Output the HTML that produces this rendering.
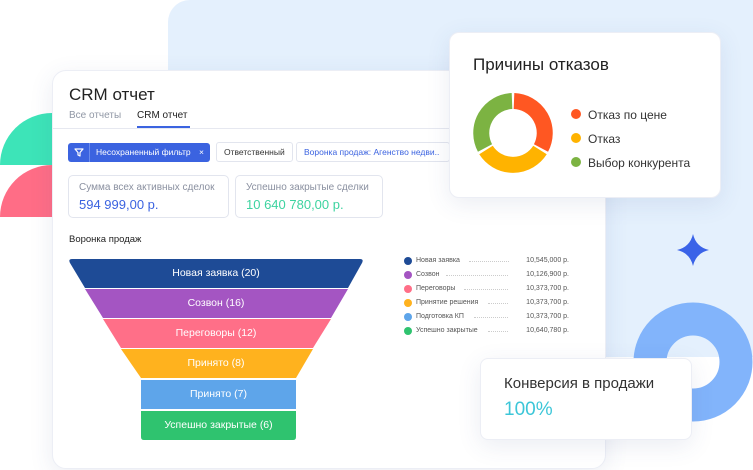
<!DOCTYPE html>
<html><head><meta charset="utf-8"><style>
*{margin:0;padding:0;box-sizing:border-box}
body{width:753px;height:470px;background:#fff;position:relative;overflow:hidden;font-family:"Liberation Sans","Noto Sans CJK SC",sans-serif}
.abs{position:absolute}
.panel{left:168px;top:0;width:600px;height:357px;background:#e4f0fd;border-radius:22px 0 0 0}
.card{background:#fff;border-radius:14px;box-shadow:0 6px 24px rgba(60,80,140,.10);border:1px solid #eceef5}
.tag{position:absolute;top:142px;height:20px;border:1px solid #e2e5ee;border-radius:3px;font-size:8.5px;line-height:18px;padding:0 7px;color:#333}
.box{position:absolute;top:175px;height:43px;border:1px solid #e2e5ee;border-radius:5px;padding:6px 10px}
.box .l{font-size:10px;color:#8a90a0}
.box .v{font-size:13px;margin-top:4px}
.row{position:absolute;left:0;font-size:7px;color:#555;width:165px;height:10px;line-height:10px}
.row i{position:absolute;left:0;top:1px;width:8px;height:8px;border-radius:50%}
.row span.n{position:absolute;left:12px}
.row span.d{position:absolute;border-top:1px dotted #ccc;top:5px}
.row span.p{position:absolute;right:0}
.fl{position:absolute;color:#fff;font-size:10.5px;text-align:center;line-height:29px}
</style></head><body>
<div class="abs panel"></div>
<svg class="abs" style="left:0;top:0" width="753" height="470">
<circle cx="693" cy="362" r="43" fill="none" stroke="#82b4fb" stroke-width="33"/>
<path d="M52 113 A52 52 0 0 0 0 165 L52 165Z" fill="#3de4b8"/>
<path d="M52 165 A52 52 0 0 0 0 217 L52 217Z" fill="#ff6d86"/>
<path d="M693 234 Q696 247 709 250 Q696 253 693 266 Q690 253 677 250 Q690 247 693 234Z" fill="#3a63e8"/>
<path d="M407 385 Q409 396 420 398 Q409 400 407 411 Q405 400 394 398 Q405 396 407 385Z" fill="#dbe7fb"/>
</svg>
<div class="abs card" style="left:52px;top:70px;width:554px;height:399px"></div>
<div class="abs" style="left:69px;top:85px;font-size:17px;color:#222">CRM отчет</div>
<div class="abs" style="left:69px;top:110px;font-size:10px;color:#9097a5">Все отчеты</div>
<div class="abs" style="left:137px;top:110px;font-size:10px;color:#222">CRM отчет</div>
<div class="abs" style="left:137px;top:126px;width:53px;height:2px;background:#3b63e0"></div>
<div class="abs" style="left:53px;top:128px;width:552px;height:1px;background:#e6e8f0"></div>
<div class="abs" style="left:68px;top:143px;width:142px;height:19px;background:#3b63e0;border-radius:3px;color:#fff;font-size:8.5px;line-height:19px">
<span style="position:absolute;left:0;top:0;width:22px;height:19px;border-right:1px solid #6b8cee;text-align:center">
<svg width="10" height="9" viewBox="0 0 10 9" style="margin-top:5px"><path d="M1 1h8L6 4.5V8L4 7V4.5Z" fill="none" stroke="#fff" stroke-width="1.2" stroke-linejoin="round"/></svg></span>
<span style="position:absolute;left:28px">Несохраненный фильтр</span><span style="position:absolute;left:131px">×</span></div>
<div class="tag" style="left:216px">Ответственный</div>
<div class="tag" style="left:296px;width:154px;color:#3b63e0;overflow:hidden;white-space:nowrap">Воронка продаж: Агенство недви..</div>
<div class="box" style="left:68px;width:161px"><div class="l">Сумма всех активных сделок</div><div class="v" style="color:#3b63e0">594 999,00 р.</div></div>
<div class="box" style="left:235px;width:148px"><div class="l">Успешно закрытые сделки</div><div class="v" style="color:#3dd3a0">10 640 780,00 р.</div></div>
<div class="abs" style="left:69px;top:234px;font-size:9.5px;color:#222">Воронка продаж</div>
<svg class="abs" style="left:0;top:0" width="600" height="470">
<path d="M72 259H360Q364 259 362 263L348 288H85L70 263Q68 259 72 259Z" fill="#1e4b96"/>
<path d="M85 289H348L331 318H103Z" fill="#a455c2"/>
<path d="M103 319H331L313 348H121Z" fill="#ff6f88"/>
<path d="M121 349H313L296 378H141Z" fill="#ffb21e"/>
<rect x="141" y="380" width="155" height="29" fill="#5ea5ea"/>
<path d="M141 411H296V437Q296 440 293 440H144Q141 440 141 437Z" fill="#2fc36f"/>
</svg>
<div class="fl" style="left:69px;top:259px;width:294px">Новая заявка (20)</div>
<div class="fl" style="left:69px;top:289px;width:294px">Созвон (16)</div>
<div class="fl" style="left:69px;top:319px;width:294px">Переговоры (12)</div>
<div class="fl" style="left:69px;top:349px;width:294px">Принято (8)</div>
<div class="fl" style="left:141px;top:380px;width:155px">Принято (7)</div>
<div class="fl" style="left:141px;top:411px;width:155px">Успешно закрытые (6)</div>
<div class="abs" style="left:404px;top:256px;width:151px;height:84px">
<div class="row" style="top:0"><i style="background:#1e4b96"></i><span class="n">Новая заявка</span><span class="d" style="left:65px;width:40px"></span><span class="p">10,545,000 р.</span></div>
<div class="row" style="top:14px"><i style="background:#a455c2"></i><span class="n">Созвон</span><span class="d" style="left:42px;width:62px"></span><span class="p">10,126,900 р.</span></div>
<div class="row" style="top:28px"><i style="background:#ff6f88"></i><span class="n">Переговоры</span><span class="d" style="left:60px;width:44px"></span><span class="p">10,373,700 р.</span></div>
<div class="row" style="top:42px"><i style="background:#ffb21e"></i><span class="n">Принятие решения</span><span class="d" style="left:84px;width:20px"></span><span class="p">10,373,700 р.</span></div>
<div class="row" style="top:56px"><i style="background:#5ea5ea"></i><span class="n">Подготовка КП</span><span class="d" style="left:70px;width:34px"></span><span class="p">10,373,700 р.</span></div>
<div class="row" style="top:70px"><i style="background:#2fc36f"></i><span class="n">Успешно закрытые</span><span class="d" style="left:84px;width:20px"></span><span class="p">10,640,780 р.</span></div>
</div>
<div class="abs card" style="left:449px;top:32px;width:272px;height:166px;border-radius:10px"></div>
<div class="abs" style="left:473px;top:55px;font-size:17px;color:#222">Причины отказов</div>
<svg class="abs" style="left:473px;top:93px" width="80" height="80" viewBox="-40 -40 80 80">
<g fill="none" stroke-width="16">
<path d="M1 -32 A32 32 0 0 1 28 15" stroke="#ff5722"/>
<path d="M27 17 A32 32 0 0 1 -27 17" stroke="#ffb300"/>
<path d="M-28 15 A32 32 0 0 1 -1 -32" stroke="#7cb342"/>
</g></svg>
<div class="abs" style="left:571px;top:103px;font-size:12px;color:#333;line-height:24px">
<div><span style="display:inline-block;width:10px;height:10px;border-radius:50%;background:#ff5722;margin-right:7px"></span>Отказ по цене</div>
<div><span style="display:inline-block;width:10px;height:10px;border-radius:50%;background:#ffb300;margin-right:7px"></span>Отказ</div>
<div><span style="display:inline-block;width:10px;height:10px;border-radius:50%;background:#7cb342;margin-right:7px"></span>Выбор конкурента</div>
</div>
<div class="abs card" style="left:480px;top:358px;width:212px;height:82px;border-radius:8px"></div>
<div class="abs" style="left:504px;top:375px;font-size:15px;color:#333">Конверсия в продажи</div>
<div class="abs" style="left:504px;top:399px;font-size:19px;color:#3cc6d8">100%</div>
</body></html>
